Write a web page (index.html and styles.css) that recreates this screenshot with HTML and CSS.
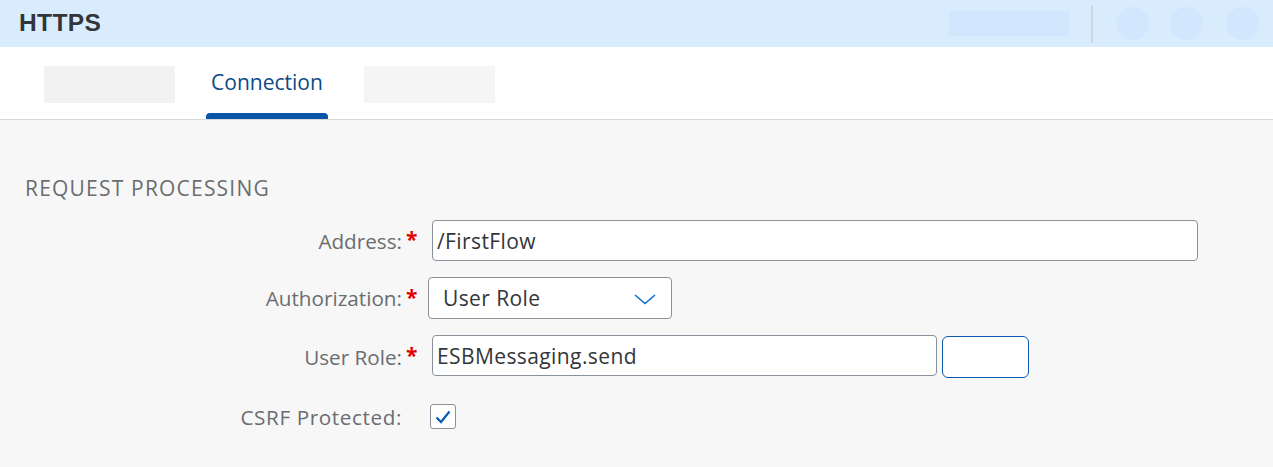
FILE: index.html
```html
<!DOCTYPE html>
<html>
<head>
<meta charset="utf-8">
<link rel="stylesheet" href="styles.css">
</head>
<body>
<header class="header">
  <h1 class="title">HTTPS</h1>
  <div class="header-actions">
    <div class="ph-rect"></div>
    <div class="divider"></div>
    <div class="ph-circle"></div>
    <div class="ph-circle"></div>
    <div class="ph-circle"></div>
  </div>
</header>
<nav class="tabs">
  <div class="tab-ph tab-ph1"></div>
  <div class="tab active"><span>Connection</span></div>
  <div class="tab-ph tab-ph2"></div>
</nav>
<main class="content">
  <h2 class="section-title">REQUEST PROCESSING</h2>
  <div class="form">
    <div class="row row-address">
      <div class="label">Address:</div><div class="req">*</div>
      <div class="input input-address">/FirstFlow</div>
    </div>
    <div class="row row-auth">
      <div class="label">Authorization:</div><div class="req">*</div>
      <div class="select">
        <span>User Role</span>
        <svg class="chev" width="22" height="11" viewBox="0 0 22 11"><path d="M1 1 L11 9.5 L21 1" fill="none" stroke="#0a6ed1" stroke-width="1.6"/></svg>
      </div>
    </div>
    <div class="row row-role">
      <div class="label">User Role:</div><div class="req">*</div>
      <div class="input input-role">ESBMessaging.send</div>
      <div class="btn"></div>
    </div>
    <div class="row row-csrf">
      <div class="label label-csrf">CSRF Protected:</div><div class="req"></div>
      <div class="checkbox">
        <svg width="16" height="14" viewBox="0 0 16 14"><path d="M1.5 7.5 L6 12 L14.5 1.5" fill="none" stroke="#0a5bb0" stroke-width="2.2"/></svg>
      </div>
    </div>
  </div>
</main>
</body>
</html>
```

FILE: styles.css
```css
* { box-sizing: border-box; }
html, body { margin: 0; padding: 0; }
body {
  width: 1273px;
  height: 467px;
  overflow: hidden;
  background: #f7f7f7;
  font-family: "Open Sans", "Liberation Sans", sans-serif;
  color: #32363a;
}
.header {
  height: 47px;
  background: #d9ecfe;
  display: flex;
  align-items: center;
  justify-content: space-between;
  padding: 0 0 0 19px;
}
.title {
  margin: 0;
  font-family: "Liberation Sans", sans-serif;
  font-weight: bold;
  font-size: 24.5px;
  letter-spacing: 0.4px;
  color: #32363a;
  line-height: 1;
}
.header-actions {
  display: flex;
  align-items: center;
  height: 47px;
  padding-right: 14px;
}
.ph-rect {
  width: 120px;
  height: 25px;
  background: #d1e7fe;
  margin-right: 22px;
}
.divider {
  width: 2px;
  height: 38px;
  background: #d4d8dc;
  margin-right: 23px;
}
.ph-circle {
  width: 33px;
  height: 33px;
  border-radius: 50%;
  background: #d1e7fe;
}
.ph-circle + .ph-circle { margin-left: 21px; }
.ph-circle:last-child { margin-left: 23px; }

.tabs {
  height: 73px;
  background: #ffffff;
  border-bottom: 1px solid #d9d9d9;
  display: flex;
  align-items: flex-start;
  padding-left: 44px;
}
.tab-ph {
  width: 131px;
  height: 37px;
  margin-top: 19px;
}
.tab-ph1 { background: #f2f2f2; }
.tab-ph2 { background: #f5f5f5; }
.tab {
  position: relative;
  width: 122px;
  height: 72px;
  margin: 0 36px 0 31px;
  display: flex;
  justify-content: center;
  padding-top: 21px;
  font-size: 21px;
  line-height: 28px;
  color: #0b4a86;
}
.tab.active::after {
  content: "";
  position: absolute;
  left: 0;
  right: 0;
  bottom: 0;
  height: 6px;
  background: #0a55a8;
  border-radius: 4px 4px 0 0;
}

.content {
  padding: 55px 0 0 25px;
}
.section-title {
  margin: 0;
  font-weight: normal;
  font-size: 21px;
  line-height: 26px;
  color: #6a6d70;
  letter-spacing: 1.2px;
}
.form {
  margin-top: 19px;
}
.row {
  display: flex;
  align-items: center;
}
.label {
  width: 377px;
  text-align: right;
  font-size: 20.7px;
  color: #6a6d70;
}
.label-csrf { letter-spacing: 0.6px; }
.req {
  width: 15px;
  padding-left: 4px;
  color: #e00000;
  font-size: 21px;
  font-weight: bold;
  line-height: 1;
  position: relative;
  top: -1px;
}
.input, .select {
  background: #fff;
  border: 1px solid #89919a;
  border-radius: 4px;
  font-size: 21px;
  letter-spacing: 0.4px;
  color: #32363a;
  display: flex;
  align-items: center;
}
.input-address {
  margin-left: 15px;
  width: 766px;
  height: 41px;
  padding-left: 4px;
}
.row-auth { margin-top: 16px; }
.select {
  margin-left: 11px;
  width: 244px;
  height: 42px;
  padding-left: 14px;
  justify-content: space-between;
  padding-right: 15px;
}
.chev { margin-top: 2px; }
.row-role {
  margin-top: 16px;
  align-items: flex-start;
}
.row-role .label, .row-role .req { align-self: center; }
.input-role {
  margin-left: 15px;
  width: 505px;
  height: 41px;
  padding-left: 4px;
}
.btn {
  margin-left: 5px;
  width: 87px;
  height: 42px;
  border: 1px solid #0a5bb0;
  border-radius: 6px;
  background: #fff;
  margin-top: 1px;
}
.row-csrf {
  margin-top: 26px;
  height: 25px;
}
.checkbox {
  margin-left: 13px;
  width: 26px;
  height: 25px;
  border: 1px solid #89919a;
  border-radius: 3px;
  background: #fff;
  display: flex;
  align-items: center;
  justify-content: center;
}
```
